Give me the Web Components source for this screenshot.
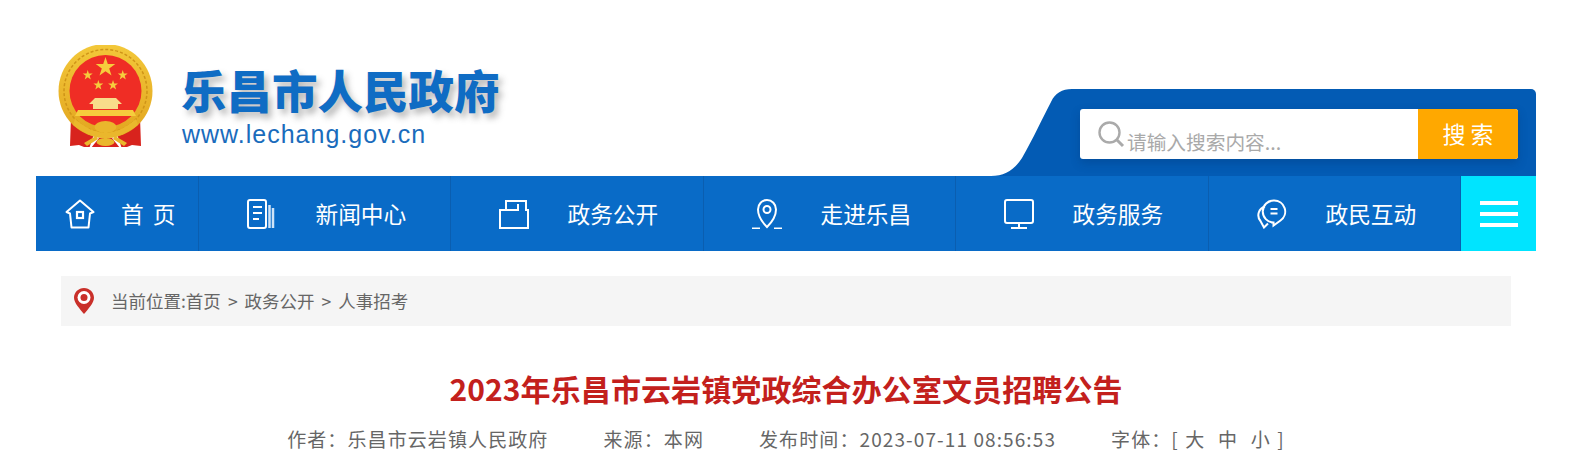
<!DOCTYPE html>
<html lang="zh-CN">
<head>
<meta charset="utf-8">
<title>2023年乐昌市云岩镇党政综合办公室文员招聘公告</title>
<style>
  html, body { margin: 0; height: 463px; overflow: hidden; background: #fff; }
  body { font-family: "Noto Sans CJK SC", "Liberation Sans", sans-serif; }
  .page { width: 1500px; margin-left: 36px; }
</style>
</head>
<body>
<div class="page">
  <gov-header></gov-header>
  <gov-nav>
    <nav-item label="首&nbsp;页" first>
      <svg viewBox="0 0 30 30" fill="none" stroke="#fff" stroke-width="2"><path d="M15 1.500 28.500 13 25 14.500 23.500 28.500H6.500L5 14.500 1.500 13Z" stroke-linejoin="round"/><rect x="12" y="13" width="6" height="6" stroke-width="2.200"/></svg>
    </nav-item>
    <nav-item label="新闻中心">
      <svg viewBox="1 0 30 30" fill="none" stroke="#fff" stroke-width="2"><rect x="2" y="1" width="18" height="28" rx="2"/><path d="M7 8H16M7 14H16M7 20H13"/><path d="M23.500 6V29M27 9V29" stroke="#cfe3f7" stroke-width="2.500"/></svg>
    </nav-item>
    <nav-item label="政务公开">
      <svg viewBox="0 0 30 30" fill="none" stroke="#fff" stroke-width="2"><path d="M1 29V11H7V2H27V11H29V29Z"/><path d="M7 11H19V5"/></svg>
    </nav-item>
    <nav-item label="走进乐昌">
      <svg viewBox="0 0 30 30" fill="none" stroke="#fff" stroke-width="2"><path d="M15 28C11 24 6 17 6 10.500A9 9.500 0 0 1 24 10.500C24 17 19 24 15 28Z"/><circle cx="15" cy="10.500" r="3.500"/><path d="M0 29.500H8M22 29.500H30"/></svg>
    </nav-item>
    <nav-item label="政务服务">
      <svg viewBox="0 0 30 30" fill="none" stroke="#fff" stroke-width="2"><rect x="1" y="1" width="28" height="23" rx="2"/><path d="M15 24V29M7 29H23"/></svg>
    </nav-item>
    <nav-item label="政民互动">
      <svg viewBox="1.500 0 30 30" fill="none" stroke="#fff" stroke-width="2"><path d="M18.500 1.500A11 11 0 0 1 25 21.500L18 26.500 18 23.500A11 11 0 0 1 18.500 1.500Z"/><path d="M9.500 7.500A9 9 0 0 0 5 22L8.500 28.500 12.500 24.500"/><path d="M15 10H22M15 14.500H22"/></svg>
    </nav-item>
    <nav-menu></nav-menu>
  </gov-nav>
  <gov-crumb>当前位置:首页<i>&gt;</i>政务公开<i>&gt;</i>人事招考</gov-crumb>
  <article-head></article-head>
</div>

<script>
// site header: emblem, site name and the search tab
class GovHeader extends HTMLElement {
  constructor() {
    super();
    const shadow = this.attachShadow({mode: 'open'});
    shadow.innerHTML = `
      <style>
        :host { display: flex; height: 176px; justify-content: space-between; }
        .logo { display: flex; padding: 45px 0 0 22px; }
        .emblem { width: 96px; height: 102px; }
        .name { margin-left: 27px; padding-top: 16px; }
        .cn {
          color: #0f6cc4;
          font-size: 45.500px;
          font-weight: 900;
          line-height: 56px;
          text-shadow: 4px 5px 6px rgba(60, 60, 60, .35);
          white-space: nowrap;
        }
        .url {
          color: #1a6cbc;
          font-family: "Liberation Sans", sans-serif;
          font-size: 25px;
          letter-spacing: 1px;
          line-height: 34px;
          margin-left: 1px;
        }
        .tab { align-self: flex-end; display: flex; height: 87px; }
        .curve { width: 81px; height: 87px; display: block; margin-right: -1px; }
        .panel {
          align-items: flex-start;
          background: #035bb4;
          border-radius: 0 5px 0 0;
          display: flex;
          padding: 20px 18px 0 9px;
        }
        .box {
          background: #fff;
          border-radius: 3px;
          box-shadow: 0 4px 10px rgba(0, 40, 90, .25);
          display: flex;
          height: 50px;
          overflow: hidden;
          width: 438px;
        }
        .field { align-items: center; display: flex; flex: 1; padding-left: 18px; }
        .field svg { width: 27px; height: 27px; margin-right: 2px; }
        .hint { color: #a9a9a9; font-size: 19.700px; padding-top: 14px; }
        .go {
          align-items: center;
          background: #ffa800;
          color: #fff;
          display: flex;
          font-size: 23px;
          justify-content: center;
          padding-bottom: 2px;
          width: 100px;
        }
      </style>
      <div class="logo">
        <svg class="emblem" viewBox="13 10 96 102">
          <defs>
            <linearGradient id="gold" x1="0" y1="0" x2="0" y2="1">
              <stop offset="0" stop-color="#f3c83a"/>
              <stop offset="1" stop-color="#e2a51f"/>
            </linearGradient>
          </defs>
          <!-- ribbons sit behind the ring -->
          <g fill="#d8231d">
            <path d="M26 82 36 80 50 96 44 114 34 110 25 111Z"/>
            <path d="M95 82 85 80 71 96 77 114 87 110 96 111Z"/>
            <path d="M46 113 54 103H67L75 113Z"/>
          </g>
          <circle cx="60.500" cy="56" r="47" fill="url(#gold)"/>
          <circle cx="60.500" cy="56" r="41.500" fill="none" stroke="#cf9418" stroke-width="1.500" stroke-dasharray="3 2"/>
          <circle cx="60.500" cy="56" r="36" fill="#ef2d25"/>
          <g fill="#f6cd3d">
            <path d="M60.500 22l2.300 7.100h7.500l-6.100 4.400 2.300 7.100-6-4.400-6 4.400 2.300-7.100-6.100-4.400h7.500z"/>
            <path d="M42.700 35l1.200 3.600h3.800l-3 2.200 1.100 3.600-3.100-2.200-3 2.200 1.100-3.600-3-2.200h3.800z"/>
            <path d="M77.700 35l1.200 3.600h3.800l-3 2.200 1.100 3.600-3.100-2.200-3 2.200 1.100-3.600-3-2.200h3.800z"/>
            <path d="M53.300 45l1.200 3.600h3.800l-3 2.200 1.100 3.600-3.100-2.200-3 2.200 1.100-3.600-3-2.200h3.800z"/>
            <path d="M68 45l1.200 3.600h3.800l-3 2.200 1.100 3.600-3.100-2.200-3 2.200 1.100-3.600-3-2.200h3.800z"/>
          </g>
          <path d="M50 63H71L77 69H73V74H48V69H44Z" fill="#f8dc8a"/>
          <path d="M33 75H88L91 81H30Z" fill="#f6cd3d"/>
          <path d="M30 84C42 94 50 97 60.500 98 71 97 79 94 91 84L93 90C80 100 70 103 60.500 103 51 103 41 100 28 90Z" fill="#eab72c"/>
          <g fill="#eab72c">
            <ellipse cx="60.500" cy="92" rx="11" ry="6"/>
            <ellipse cx="60.500" cy="107" rx="9" ry="4"/>
            <path d="M59 96H62V104H59Z"/>
            <path d="M39 108 51 101 53 104 42 111ZM82 108 70 101 68 104 79 111Z"/>
          </g>
        </svg>
        <div class="name">
          <div class="cn">乐昌市人民政府</div>
          <div class="url">www.lechang.gov.cn</div>
        </div>
      </div>
      <div class="tab">
        <svg class="curve" viewBox="0 0 81 87"><path d="M0 87C14 87 24 80 31 69 42 50 52 28 60 13 64 4 71 0 81 0V87Z" fill="#035bb4"/></svg>
        <div class="panel">
          <div class="box">
            <div class="field">
              <svg viewBox="0 0 27 27" fill="none" stroke="#aaa"><circle cx="11.500" cy="11.500" r="10" stroke-width="2.400"/><path d="M19 19l6 6" stroke-width="3"/></svg>
              <span class="hint">请输入搜索内容...</span>
            </div>
            <div class="go">搜 索</div>
          </div>
        </div>
      </div>
    `;
  }
}

// blue bar that holds the nav items
class GovNav extends HTMLElement {
  constructor() {
    super();
    const shadow = this.attachShadow({mode: 'open'});
    shadow.innerHTML = `
      <style>
        :host {
          background: #096bc7;
          display: grid;
          grid-template-columns: 163px 252px 253px 252px 253px 252px 75px;
          height: 75px;
        }
      </style>
      <slot></slot>
    `;
  }
}

// one nav entry, icon goes in the slot
class NavItem extends HTMLElement {
  constructor() {
    super();
    const shadow = this.attachShadow({mode: 'open'});
    const first = this.hasAttribute('first');
    shadow.innerHTML = `
      <style>
        :host {
          align-items: center;
          border-right: 1px solid #0a5eb0;
          box-sizing: border-box;
          color: #fff;
          display: flex;
          font-size: 22.700px;
          padding-left: ${first ? 29 : 48}px;
        }
        ::slotted(svg) { display: block; flex: none; width: 30px; height: 30px; }
        span {
          letter-spacing: ${first ? 2 : 0}px;
          margin-left: ${first ? 26 : 38.500}px;
          white-space: nowrap;
        }
      </style>
      <slot></slot>
      <span></span>
    `;
    shadow.querySelector('span').textContent = this.getAttribute('label');
  }
}

// cyan hamburger at the end of the bar
class NavMenu extends HTMLElement {
  constructor() {
    super();
    const shadow = this.attachShadow({mode: 'open'});
    shadow.innerHTML = `
      <style>
        :host {
          align-items: center;
          background: #00e4ff;
          display: flex;
          flex-direction: column;
          gap: 7px;
          justify-content: center;
        }
        b { background: #fff; display: block; height: 4px; width: 38px; }
      </style>
      <b></b><b></b><b></b>
    `;
  }
}

// breadcrumb strip
class GovCrumb extends HTMLElement {
  constructor() {
    super();
    const shadow = this.attachShadow({mode: 'open'});
    shadow.innerHTML = `
      <style>
        :host {
          align-items: center;
          background: #f5f5f5;
          color: #666;
          display: flex;
          font-size: 17.500px;
          height: 50px;
          margin: 25px 25px 0;
          padding-left: 13px;
        }
        svg { width: 20px; height: 26px; margin-right: 17px; flex: none; }
        .text { padding-bottom: 2px; }
        ::slotted(i) { font-style: normal; margin: 0 7px; }
      </style>
      <svg viewBox="0 0 20 26">
        <path d="M10 0C4.500 0 0 4.300 0 9.700 0 15 6 21 10 26 14 21 20 15 20 9.700 20 4.300 15.500 0 10 0Z" fill="#c9302a"/>
        <circle cx="10" cy="9.500" r="6.500" fill="#fff"/>
        <circle cx="10" cy="9.500" r="3.500" fill="#c9302a"/>
      </svg>
      <div class="text"><slot></slot></div>
    `;
  }
}

// article title and the meta line under it
class ArticleHead extends HTMLElement {
  constructor() {
    super();
    const shadow = this.attachShadow({mode: 'open'});
    shadow.innerHTML = `
      <style>
        :host { display: block; text-align: center; }
        h1 {
          color: #c3201c;
          font-size: 30px;
          font-weight: 700;
          letter-spacing: .1px;
          line-height: 40px;
          margin: 42px 0 0;
        }
        .meta {
          color: #666;
          display: flex;
          font-size: 19px;
          gap: 55px;
          justify-content: center;
          letter-spacing: 1.100px;
          line-height: 30px;
          margin-top: 16px;
        }
        .size { word-spacing: 1px; }
      </style>
      <h1>2023年乐昌市云岩镇党政综合办公室文员招聘公告</h1>
      <div class="meta">
        <span>作者：乐昌市云岩镇人民政府</span>
        <span>来源：本网</span>
        <span>发布时间：2023-07-11 08:56:53</span>
        <span class="size">字体：[ 大&nbsp; 中&nbsp; 小 ]</span>
      </div>
    `;
  }
}

customElements.define('gov-header', GovHeader);
customElements.define('gov-nav', GovNav);
customElements.define('nav-item', NavItem);
customElements.define('nav-menu', NavMenu);
customElements.define('gov-crumb', GovCrumb);
customElements.define('article-head', ArticleHead);
</script>
</body>
</html>
